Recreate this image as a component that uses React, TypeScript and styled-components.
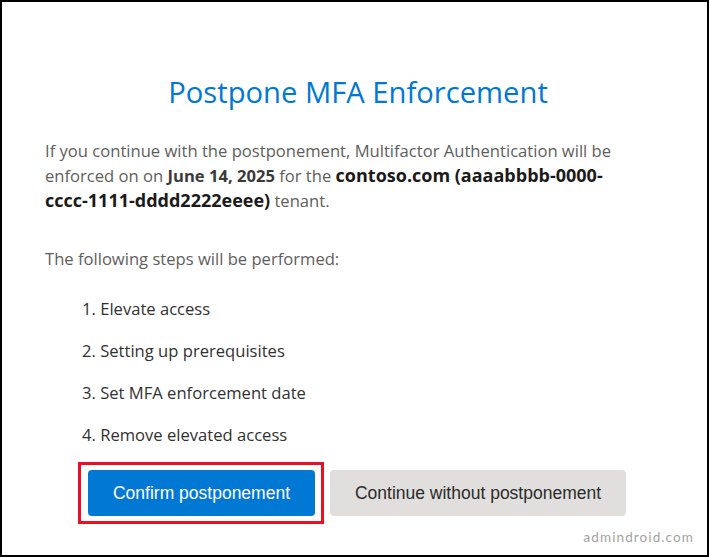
import React from "react";
import styled, { createGlobalStyle } from "styled-components";

const Global = createGlobalStyle`
  html, body { margin: 0; padding: 0; background: #fff; }
  * { box-sizing: border-box; }
`;

const Frame = styled.div`
  width: 709px;
  height: 557px;
  border: 2px solid #000;
  background: #fff;
  position: relative;
  padding: 72px 43px 0 43px;
  font-family: "Open Sans", "Noto Sans", sans-serif;
  display: flex;
  flex-direction: column;
`;

const Title = styled.h1`
  margin: 0;
  text-align: center;
  color: #0078d4;
  font-size: 29.2px;
  font-weight: 400;
  line-height: 36px;
  padding-left: 7px;
`;

const Para = styled.p<{ $gap: number }>`
  margin: ${(p) => p.$gap}px 0 0 0;
  max-width: 595px;
  color: #605e5c;
  font-size: 16.6px;
  line-height: 25px;
`;

const Strong = styled.strong<{ $dark?: boolean }>`
  font-weight: 700;
  font-size: ${(p) => (p.$dark ? "18px" : "inherit")};
  color: ${(p) => (p.$dark ? "#1b1a19" : "#3b3a39")};
`;

const Steps = styled.ol`
  margin: 25px 0 0 0;
  padding: 0 0 0 37px;
  list-style: none;
  display: flex;
  flex-direction: column;
  gap: 16px;
`;

const Step = styled.li`
  color: #323130;
  font-size: 16.6px;
  line-height: 26px;
`;

const Actions = styled.div`
  display: flex;
  gap: 15px;
  margin-top: 22px;
  padding-left: 43px;
`;

const Highlight = styled.div`
  position: relative;
  &::after {
    content: "";
    position: absolute;
    left: -10px;
    right: -9px;
    top: -8px;
    bottom: -8px;
    border: 3px solid #e81123;
    pointer-events: none;
  }
`;

const Button = styled.button<{ $primary?: boolean }>`
  height: 46px;
  border: none;
  border-radius: 4px;
  font-family: "Liberation Sans", Arial, sans-serif;
  font-size: 17.5px;
  padding: 0;
  background: ${(p) => (p.$primary ? "#0078d4" : "#e1dfdd")};
  color: ${(p) => (p.$primary ? "#fff" : "#2b2b2b")};
  width: ${(p) => (p.$primary ? "227px" : "296px")};
  cursor: pointer;
`;

const Watermark = styled.div`
  position: absolute;
  right: 13px;
  bottom: 10px;
  font-family: "Lato", sans-serif;
  font-size: 13.5px;
  letter-spacing: 1.1px;
  color: #a3a3a3;
`;

export default function App() {
  return (
    <>
      <Global />
      <Frame>
        <Title>Postpone MFA Enforcement</Title>
        <Para $gap={28}>
          If you continue with the postponement, Multifactor Authentication will be
          enforced on on <Strong>June 14, 2025</Strong> for the{" "}
          <Strong $dark>contoso.com (aaaabbbb-0000-cccc-1111-dddd2222eeee)</Strong> tenant.
        </Para>
        <Para $gap={33}>The following steps will be performed:</Para>
        <Steps>
          <Step>1. Elevate access</Step>
          <Step>2. Setting up prerequisites</Step>
          <Step>3. Set MFA enforcement date</Step>
          <Step>4. Remove elevated access</Step>
        </Steps>
        <Actions>
          <Highlight>
            <Button $primary>Confirm postponement</Button>
          </Highlight>
          <Button>Continue without postponement</Button>
        </Actions>
        <Watermark>admindroid.com</Watermark>
      </Frame>
    </>
  );
}
